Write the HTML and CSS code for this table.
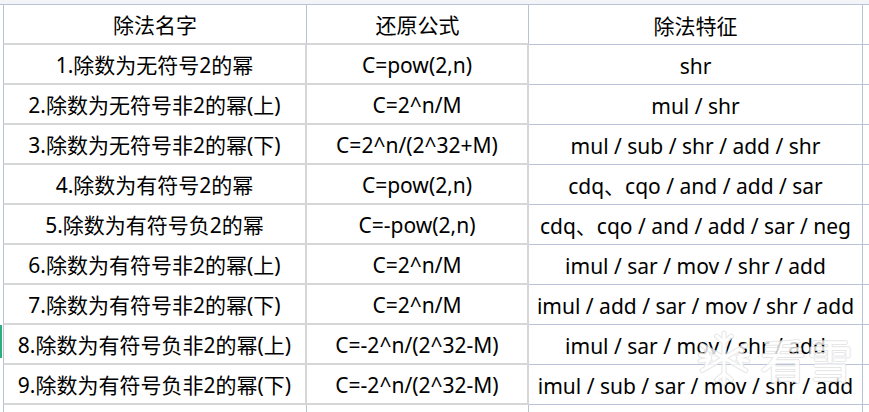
FILE: index.html
```html
<!DOCTYPE html>
<html lang="zh">
<head>
<meta charset="utf-8">
<title>除法</title>
<link rel="stylesheet" href="styles.css">
</head>
<body>
<div class="topband"></div>
<div class="sheet">
  <div class="gut"></div>
  <div class="c c1 h">除法名字</div>
  <div class="c c2 h">还原公式</div>
  <div class="c c3 h">除法特征</div>
  <div class="c c4"></div>

  <div class="gut"></div>
  <div class="c c1 b">1.除数为无符号2的幂</div>
  <div class="c c2 b">C=pow(2,n)</div>
  <div class="c c3">shr</div>
  <div class="c c4"></div>

  <div class="gut"></div>
  <div class="c c1 b">2.除数为无符号非2的幂(上)</div>
  <div class="c c2 b">C=2^n/M</div>
  <div class="c c3">mul / shr</div>
  <div class="c c4"></div>

  <div class="gut"></div>
  <div class="c c1 b">3.除数为无符号非2的幂(下)</div>
  <div class="c c2 b">C=2^n/(2^32+M)</div>
  <div class="c c3">mul / sub / shr / add / shr</div>
  <div class="c c4"></div>

  <div class="gut"></div>
  <div class="c c1 b">4.除数为有符号2的幂</div>
  <div class="c c2 b">C=pow(2,n)</div>
  <div class="c c3">cdq、cqo / and / add / sar</div>
  <div class="c c4"></div>

  <div class="gut"></div>
  <div class="c c1 b">5.除数为有符号负2的幂</div>
  <div class="c c2 b">C=-pow(2,n)</div>
  <div class="c c3">cdq、cqo / and / add / sar / neg</div>
  <div class="c c4"></div>

  <div class="gut"></div>
  <div class="c c1 b">6.除数为有符号非2的幂(上)</div>
  <div class="c c2 b">C=2^n/M</div>
  <div class="c c3">imul / sar / mov / shr / add</div>
  <div class="c c4"></div>

  <div class="gut"></div>
  <div class="c c1 b">7.除数为有符号非2的幂(下)</div>
  <div class="c c2 b">C=2^n/M</div>
  <div class="c c3">imul / add / sar / mov / shr / add</div>
  <div class="c c4"></div>

  <div class="gut"><span class="sel"></span></div>
  <div class="c c1 b">8.除数为有符号负非2的幂(上)</div>
  <div class="c c2 b">C=-2^n/(2^32-M)</div>
  <div class="c c3">imul / sar / mov / shr / add</div>
  <div class="c c4"></div>

  <div class="gut"></div>
  <div class="c c1 b">9.除数为有符号负非2的幂(下)</div>
  <div class="c c2 b">C=-2^n/(2^32-M)</div>
  <div class="c c3">imul / sub / sar / mov / shr / add</div>
  <div class="c c4"></div>

  <div class="gut"></div>
  <div class="t t1"></div>
  <div class="t t2"></div>
  <div class="t t3"></div>
  <div class="t"></div>
</div>
<div class="mark">
  <svg class="flake" width="56" height="56" viewBox="0 0 54 54" aria-hidden="true">
    <g stroke="#e2e2e2" stroke-width="5" stroke-linecap="round" fill="none">
      <path d="M27 3v48M6 15l42 24M6 39l42-24"/>
      <path d="M20 6l7 6 7-6M20 48l7-6 7 6M4 24l9 2 -3 8M50 24l-9 2 3 8M4 30l9-2-3-8M50 30l-9-2 3-8"/>
    </g>
    <g stroke="#ffffff" stroke-width="3" stroke-linecap="round" fill="none">
      <path d="M27 3v48M6 15l42 24M6 39l42-24"/>
      <path d="M20 6l7 6 7-6M20 48l7-6 7 6M4 24l9 2 -3 8M50 24l-9 2 3 8M4 30l9-2-3-8M50 30l-9-2 3-8"/>
    </g>
  </svg>
  <span class="mtext">看雪</span>
</div>
</body>
</html>
```
FILE: styles.css
```css
html, body {
  margin: 0;
  padding: 0;
  background: #ffffff;
}
body {
  width: 869px;
  height: 412px;
  overflow: hidden;
  position: relative;
  font-family: "Noto Sans", "Noto Sans CJK SC", sans-serif;
  font-size: 21px;
  color: #000000;
}
.topband {
  height: 4px;
  background: #f2f4f7;
  border-bottom: 1px solid #bac2d8;
}
.sheet {
  display: grid;
  grid-template-columns: 3px 304px 222px 334px 1fr;
  grid-template-rows: repeat(10, 40px) 7px;
}
.gut {
  position: relative;
}
.sel {
  position: absolute;
  left: 0;
  top: 0;
  width: 2px;
  height: 33px;
  background: #2bb07a;
}
.c {
  box-sizing: border-box;
  display: flex;
  align-items: center;
  justify-content: center;
  padding-top: 3px;
  white-space: nowrap;
  line-height: 1;
}
.c1 {
  border-left: 1px solid #bac2d8;
}
.h {
  border-right: 1px solid #bac2d8;
}
.c1.h, .c2.h {
  border-bottom: 2px solid #d6d6d6;
}
.b {
  border-right: 2px solid #d6d6d6;
  border-bottom: 2px solid #d6d6d6;
}
.c3 {
  border-right: 1px solid #bac2d8;
  border-bottom: 1px solid #bac2d8;
}
.c4 {
  border-bottom: 1px solid #bac2d8;
}
.t {
  box-sizing: border-box;
  height: 7px;
}
.t1 {
  border-left: 1px solid #bac2d8;
  border-right: 1px solid #bac2d8;
}
.t2, .t3 {
  border-right: 1px solid #bac2d8;
}
.mark {
  position: absolute;
  left: 696px;
  top: 330px;
  display: flex;
  align-items: center;
  gap: 8px;
  opacity: 0.8;
  pointer-events: none;
}
.mtext {
  font-family: "Noto Sans CJK SC", sans-serif;
  font-size: 46px;
  line-height: 1;
  color: #ffffff;
  letter-spacing: 1px;
  text-shadow: 1px 0 0 #e0e0e0, -1px 0 0 #e0e0e0, 0 1px 0 #e0e0e0, 0 -1px 0 #e0e0e0;
}
```
